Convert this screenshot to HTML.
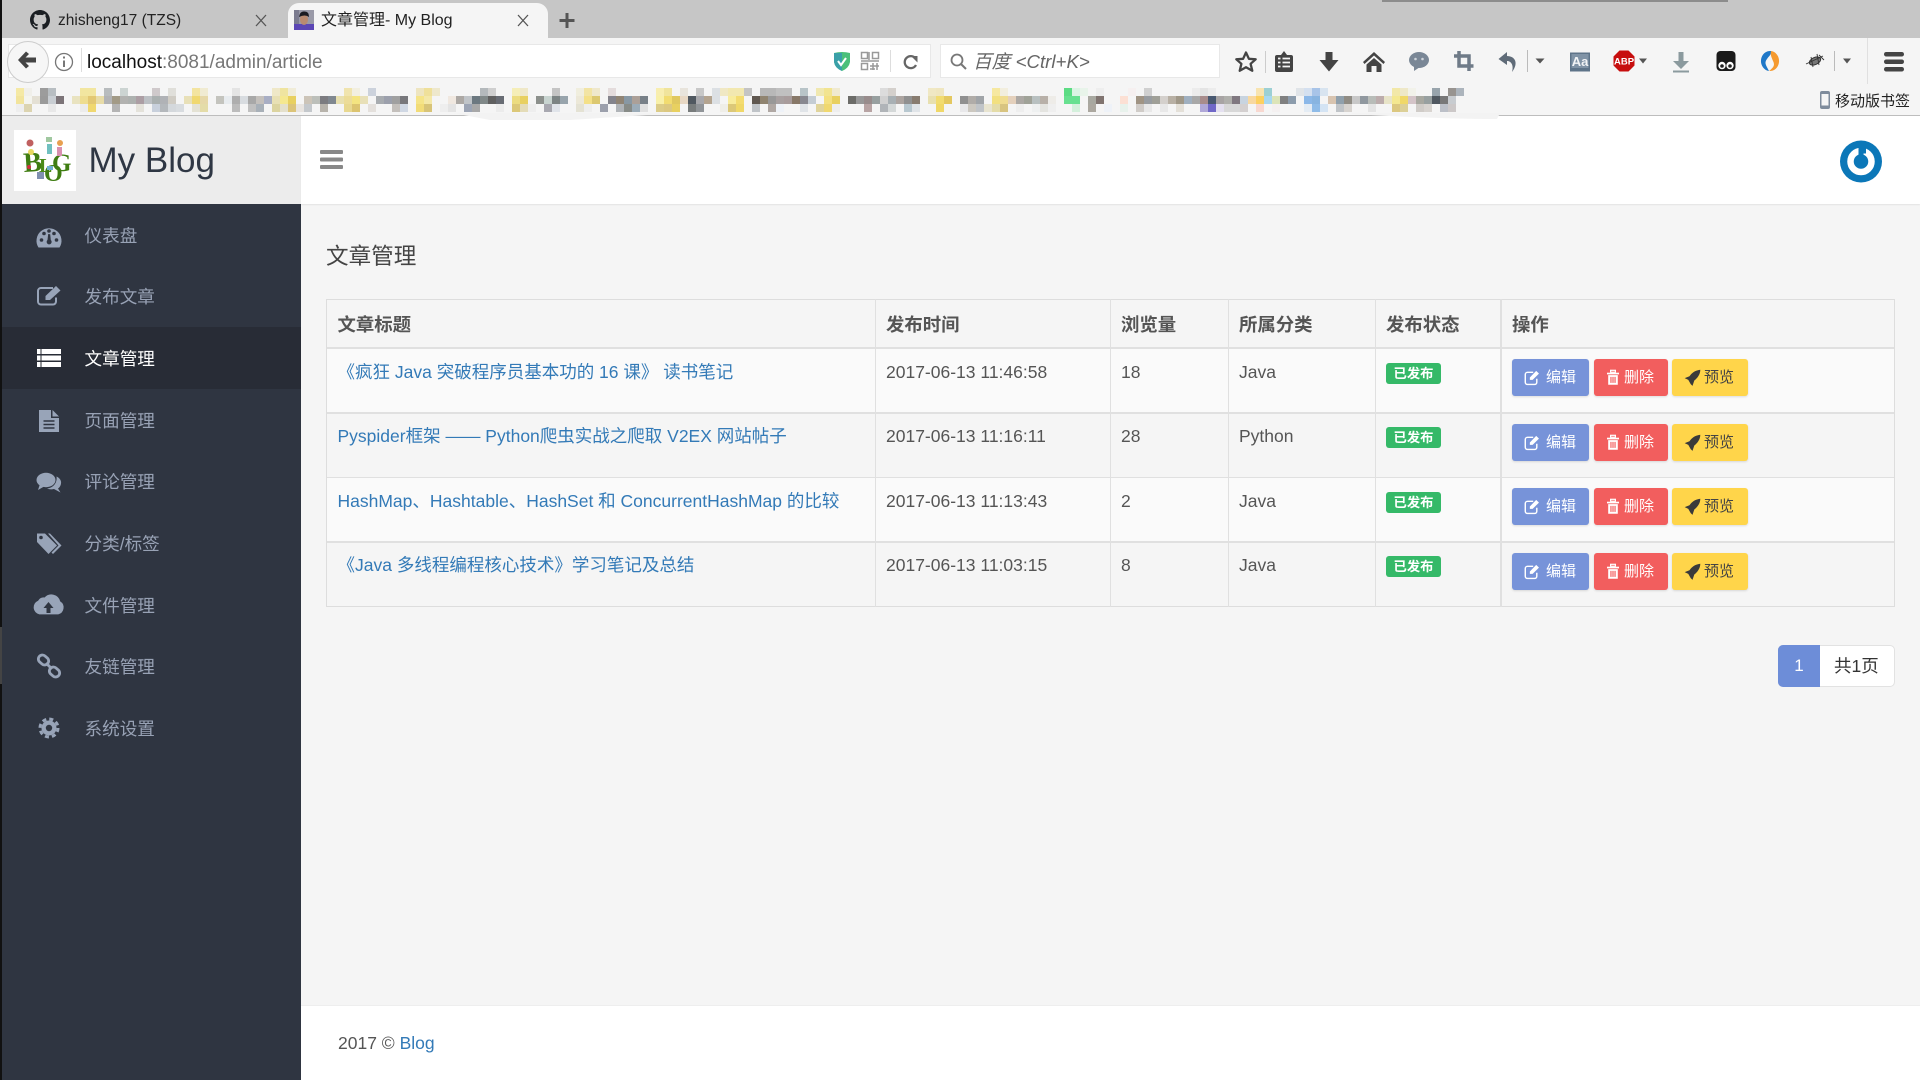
<!DOCTYPE html>
<html lang="zh-CN">
<head>
<meta charset="utf-8">
<title>文章管理- My Blog</title>
<style>
html,body{margin:0;padding:0;width:1920px;height:1080px;overflow:hidden;background:#f5f5f5;}
body{position:relative;font-family:"Liberation Sans","Noto Sans CJK SC",sans-serif;font-size:17.5px;color:#555;}
.b,.t{position:absolute;}
.t{white-space:nowrap;line-height:24px;height:24px;}
a{color:#337ab7;text-decoration:none;}
.s{left:84.5px;color:#98a2b5;font-size:17.6px;}
.h{font-weight:bold;font-size:18.4px;color:#555;}
.btn{position:absolute;height:37px;border-radius:3px;box-shadow:0 1px 2px rgba(0,0,0,.12);}
.bl{left:1512px;width:77px;background:#7793d9;}
.rd{left:1594px;width:74px;background:#f25e5e;}
.yl{left:1672px;width:76px;background:#ffd54a;}
.bt{font-size:15px;color:#fff;}
.by{font-size:15px;color:#444;}
.g{position:absolute;left:1386px;width:55px;height:21px;background:#35b968;border-radius:3px;color:#fff;font-size:13.3px;font-weight:bold;line-height:21px;text-align:center;}
svg{position:absolute;left:0;top:0;}
.m rect{width:8px;height:8px;}
</style>
</head>
<body>
<!-- browser chrome -->
<div class="b" style="left:0;top:0;width:1920px;height:38px;background:#c6c6c6;"></div>
<div class="b" style="left:1382px;top:0;width:346px;height:2px;background:#8c8c8c;"></div>
<div class="b" style="left:288px;top:3px;width:260px;height:36px;background:#f5f5f5;border-radius:11px 11px 0 0;"></div>
<div class="b" style="left:0;top:38px;width:1920px;height:78px;background:#f5f5f5;"></div>
<div class="b" style="left:8px;top:44px;width:923px;height:34px;background:#fff;border:1px solid #e8e8e8;box-sizing:border-box;"></div>
<div class="b" style="left:940px;top:44px;width:280px;height:34px;background:#fff;border:1px solid #e8e8e8;box-sizing:border-box;"></div>
<div class="b" style="left:7px;top:41px;width:40px;height:40px;border-radius:50%;background:#f6f6f6;border:1px solid #ccc;"></div>
<div class="b" style="left:0;top:115px;width:1920px;height:1px;background:#bdbdbd;"></div>

<div class="t" style="left:58px;top:8.5px;font-size:15.5px;color:#222;">zhisheng17 (TZS)</div>
<div class="t" style="left:321px;top:8.5px;font-size:16px;color:#222;">文章管理- My Blog</div>
<div class="t" style="left:87px;top:50.5px;font-size:19px;color:#777;"><span style="color:#111;">localhost</span>:8081/admin/article</div>
<div class="t" style="left:973px;top:49.5px;font-size:18.7px;color:#666;font-style:italic;">百度 &lt;Ctrl+K&gt;</div>
<div class="t" style="left:1835px;top:89.5px;font-size:15px;color:#222;">移动版书签</div>

<!-- app -->
<div class="b" style="left:2px;top:116px;width:299px;height:88px;background:#ececec;"></div>
<div class="b" style="left:301px;top:116px;width:1619px;height:88px;background:#fff;box-shadow:0 1px 1px #e4e4e4;"></div>
<div class="b" style="left:14px;top:130px;width:62px;height:61px;background:#fff;"></div>
<div class="t" style="left:88.5px;top:141px;font-size:35px;line-height:40px;height:40px;color:#2f3744;">My Blog</div>

<div class="b" style="left:2px;top:204px;width:299px;height:876px;background:#2f3541;"></div>
<div class="b" style="left:2px;top:327px;width:299px;height:62px;background:#282c36;"></div>
<div class="b" style="left:0;top:0;width:2px;height:1080px;background:#111;"></div>
<div class="b" style="left:0;top:627px;width:2px;height:57px;background:#444;"></div>

<div class="t s" style="top:224px;">仪表盘</div>
<div class="t s" style="top:285px;">发布文章</div>
<div class="t s" style="top:347px;color:#fff;">文章管理</div>
<div class="t s" style="top:409px;">页面管理</div>
<div class="t s" style="top:470px;">评论管理</div>
<div class="t s" style="top:532px;">分类/标签</div>
<div class="t s" style="top:594px;">文件管理</div>
<div class="t s" style="top:655px;">友链管理</div>
<div class="t s" style="top:717px;">系统设置</div>

<div class="t" style="left:326px;top:245px;font-size:22.6px;color:#444;">文章管理</div>

<!-- table -->
<div class="b" style="left:327px;top:348px;width:1567px;height:65px;background:#fafafa;"></div>
<div class="b" style="left:327px;top:478px;width:1567px;height:64px;background:#fafafa;"></div>
<div class="b" style="left:326px;top:299px;width:1569px;height:1px;background:#ddd;"></div>
<div class="b" style="left:326px;top:346.500px;width:1569px;height:2px;background:#e0e0e0;"></div>
<div class="b" style="left:326px;top:412px;width:1569px;height:2px;background:#e0e0e0;"></div>
<div class="b" style="left:326px;top:477px;width:1569px;height:1px;background:#e0e0e0;"></div>
<div class="b" style="left:326px;top:541px;width:1569px;height:2px;background:#e0e0e0;"></div>
<div class="b" style="left:326px;top:606px;width:1569px;height:1px;background:#ddd;"></div>
<div class="b" style="left:326px;top:299px;width:1px;height:308px;background:#ddd;"></div>
<div class="b" style="left:875px;top:299px;width:1px;height:308px;background:#e0e0e0;"></div>
<div class="b" style="left:1110px;top:299px;width:1px;height:308px;background:#e0e0e0;"></div>
<div class="b" style="left:1228px;top:299px;width:1px;height:308px;background:#e0e0e0;"></div>
<div class="b" style="left:1375px;top:299px;width:1px;height:308px;background:#e0e0e0;"></div>
<div class="b" style="left:1500px;top:299px;width:2px;height:308px;background:#e0e0e0;"></div>
<div class="b" style="left:1894px;top:299px;width:1px;height:308px;background:#ddd;"></div>

<div class="t h" style="left:337.500px;top:312.500px;">文章标题</div>
<div class="t h" style="left:886px;top:312.500px;">发布时间</div>
<div class="t h" style="left:1121px;top:312.500px;">浏览量</div>
<div class="t h" style="left:1239px;top:312.500px;">所属分类</div>
<div class="t h" style="left:1386px;top:312.500px;">发布状态</div>
<div class="t h" style="left:1512px;top:312.500px;">操作</div>

<div class="t" style="left:337.500px;top:360px;"><a href="#">《疯狂 Java 突破程序员基本功的 16 课》 读书笔记</a></div>
<div class="t" style="left:886px;top:360px;">2017-06-13 11:46:58</div>
<div class="t" style="left:1121px;top:360px;">18</div>
<div class="t" style="left:1239px;top:360px;">Java</div>
<div class="g" style="top:363px;">已发布</div>

<div class="t" style="left:337.500px;top:424px;"><a href="#">Pyspider框架 —— Python爬虫实战之爬取 V2EX 网站帖子</a></div>
<div class="t" style="left:886px;top:424px;">2017-06-13 11:16:11</div>
<div class="t" style="left:1121px;top:424px;">28</div>
<div class="t" style="left:1239px;top:424px;">Python</div>
<div class="g" style="top:427px;">已发布</div>

<div class="t" style="left:337.500px;top:489px;"><a href="#">HashMap、Hashtable、HashSet 和 ConcurrentHashMap 的比较</a></div>
<div class="t" style="left:886px;top:489px;">2017-06-13 11:13:43</div>
<div class="t" style="left:1121px;top:489px;">2</div>
<div class="t" style="left:1239px;top:489px;">Java</div>
<div class="g" style="top:492px;">已发布</div>

<div class="t" style="left:337.500px;top:553px;"><a href="#">《Java 多线程编程核心技术》学习笔记及总结</a></div>
<div class="t" style="left:886px;top:553px;">2017-06-13 11:03:15</div>
<div class="t" style="left:1121px;top:553px;">8</div>
<div class="t" style="left:1239px;top:553px;">Java</div>
<div class="g" style="top:556px;">已发布</div>

<div class="btn bl" style="top:359px;"></div><div class="btn rd" style="top:359px;"></div><div class="btn yl" style="top:359px;"></div>
<div class="btn bl" style="top:424px;"></div><div class="btn rd" style="top:424px;"></div><div class="btn yl" style="top:424px;"></div>
<div class="btn bl" style="top:488px;"></div><div class="btn rd" style="top:488px;"></div><div class="btn yl" style="top:488px;"></div>
<div class="btn bl" style="top:553px;"></div><div class="btn rd" style="top:553px;"></div><div class="btn yl" style="top:553px;"></div>

<div class="t bt" style="left:1546px;top:366px;">编辑</div><div class="t bt" style="left:1624px;top:366px;">删除</div><div class="t by" style="left:1704px;top:366px;">预览</div>
<div class="t bt" style="left:1546px;top:431px;">编辑</div><div class="t bt" style="left:1624px;top:431px;">删除</div><div class="t by" style="left:1704px;top:431px;">预览</div>
<div class="t bt" style="left:1546px;top:495px;">编辑</div><div class="t bt" style="left:1624px;top:495px;">删除</div><div class="t by" style="left:1704px;top:495px;">预览</div>
<div class="t bt" style="left:1546px;top:560px;">编辑</div><div class="t bt" style="left:1624px;top:560px;">删除</div><div class="t by" style="left:1704px;top:560px;">预览</div>

<!-- pagination -->
<div class="b" style="left:1778px;top:645px;width:117px;height:42px;background:#fff;border:1px solid #e2e2e2;border-radius:5px;box-sizing:border-box;"></div>
<div class="b" style="left:1778px;top:645px;width:42px;height:42px;background:#6d8dd8;border-radius:5px 0 0 5px;color:#fff;line-height:42px;text-align:center;font-size:17px;">1</div>
<div class="t" style="left:1834px;top:654px;color:#333;">共1页</div>

<!-- footer -->
<div class="b" style="left:301px;top:1005px;width:1619px;height:75px;background:#fff;border-top:1px solid #eee;box-sizing:border-box;"></div>
<div class="t" style="left:338px;top:1031px;color:#555;">2017 © <a href="#">Blog</a></div>

<svg width="1920" height="1080" viewBox="0 0 1920 1080" xmlns="http://www.w3.org/2000/svg">
<!-- mosaic -->
<g class="m" shape-rendering="crispEdges">
<g transform="translate(0,88)">
<rect x="16" fill="#f5e9a5"/><rect x="24" fill="#f0efea"/><rect x="40" fill="#9c9c9c"/><rect x="48" fill="#b8bec2"/><rect x="80" fill="#f2e6a0"/><rect x="88" fill="#f2e6a0"/><rect x="104" fill="#b8bcbe"/><rect x="120" fill="#ccd4d2"/><rect x="152" fill="#cfc9cb"/><rect x="168" fill="#e0dfda"/><rect x="192" fill="#f3e4a0"/><rect x="200" fill="#f0ebd2"/><rect x="232" fill="#e4e4e4"/><rect x="272" fill="#efe8c8"/><rect x="280" fill="#efe4a0"/><rect x="288" fill="#f0ecd8"/><rect x="344" fill="#f0e4ae"/><rect x="352" fill="#f2efe0"/><rect x="368" fill="#ccd2dc"/><rect x="416" fill="#eee5c0"/><rect x="424" fill="#efe09a"/><rect x="432" fill="#eee8cc"/><rect x="480" fill="#b4b9bc"/><rect x="488" fill="#cfcfcf"/><rect x="512" fill="#f5eeb8"/>
<rect x="520" fill="#efe8c8"/><rect x="552" fill="#c4c4c4"/><rect x="576" fill="#f0eede"/><rect x="584" fill="#f2e4a4"/><rect x="592" fill="#efe8cc"/><rect x="608" fill="#e4dcdc"/><rect x="656" fill="#f8eeb0"/><rect x="664" fill="#f0e49c"/><rect x="680" fill="#e8e4dc"/><rect x="696" fill="#c8c8c8"/><rect x="712" fill="#dce0e4"/><rect x="720" fill="#f0e8c4"/><rect x="728" fill="#f2e8b0"/><rect x="736" fill="#f2e8b0"/><rect x="744" fill="#c4c4c4"/><rect x="760" fill="#b8b8b8"/><rect x="768" fill="#b8b8b8"/><rect x="776" fill="#c0c0c0"/><rect x="784" fill="#c0c0c0"/><rect x="800" fill="#b8c4c8"/><rect x="816" fill="#f0e8b0"/><rect x="824" fill="#f2e490"/><rect x="832" fill="#f0ead0"/><rect x="880" fill="#dcdcdc"/><rect x="888" fill="#d4d0cc"/><rect x="928" fill="#f0e8c4"/><rect x="936" fill="#efe6c0"/><rect x="992" fill="#f6e8a0"/><rect x="1000" fill="#f2eede"/>
<rect x="1064" fill="#5cdc84"/><rect x="1072" fill="#dcf4e4"/><rect x="1080" fill="#e8f4ea"/><rect x="1096" fill="#eeeeee"/><rect x="1128" fill="#f6f0f0"/><rect x="1144" fill="#d0d0d0"/><rect x="1192" fill="#ececec"/><rect x="1200" fill="#e4e4e4"/><rect x="1208" fill="#ececec"/><rect x="1256" fill="#f8e4b0"/><rect x="1264" fill="#9cd0d4"/><rect x="1296" fill="#e0e4e8"/><rect x="1304" fill="#d4e0f0"/><rect x="1312" fill="#a8c4e8"/><rect x="1320" fill="#d8e4f0"/><rect x="1392" fill="#f2e8a8"/><rect x="1400" fill="#eee8c8"/><rect x="1408" fill="#f2f2ea"/><rect x="1432" fill="#98a4ac"/><rect x="1448" fill="#989490"/><rect x="1456" fill="#acb4bc"/>
</g>
<g transform="translate(0,96)">
<rect x="16" fill="#f2e49c"/><rect x="24" fill="#f4f4ee"/><rect x="32" fill="#e4e0d4"/><rect x="40" fill="#9a9a9a"/><rect x="48" fill="#c8cdd2"/><rect x="56" fill="#7c7478"/><rect x="72" fill="#e9e3c0"/><rect x="80" fill="#eedd90"/><rect x="88" fill="#e3c873"/><rect x="96" fill="#e8dca8"/><rect x="104" fill="#b2b3b5"/><rect x="112" fill="#a29a86"/><rect x="120" fill="#b2b2b0"/><rect x="128" fill="#adb1af"/><rect x="136" fill="#ac9ea4"/><rect x="144" fill="#bcc0c4"/><rect x="152" fill="#aab0b0"/><rect x="160" fill="#b0b2b6"/><rect x="168" fill="#d0ccc4"/><rect x="184" fill="#e8e0b8"/><rect x="192" fill="#f0d870"/><rect x="200" fill="#e6d8a8"/><rect x="216" fill="#c4c4be"/><rect x="224" fill="#e8ecef"/><rect x="232" fill="#aeaeae"/><rect x="240" fill="#d8dce0"/><rect x="248" fill="#a8a8a8"/><rect x="256" fill="#c4c0bc"/><rect x="264" fill="#a8aec4"/><rect x="272" fill="#e8e0b4"/><rect x="280" fill="#f5e890"/><rect x="288" fill="#e8d060"/><rect x="304" fill="#ccc4b8"/><rect x="312" fill="#bcbfba"/><rect x="320" fill="#7c7c80"/><rect x="328" fill="#808890"/><rect x="336" fill="#e8e0b0"/><rect x="344" fill="#ecdc98"/><rect x="352" fill="#f4e480"/><rect x="360" fill="#e8e0b8"/><rect x="376" fill="#a8acb0"/><rect x="384" fill="#9ca0ac"/><rect x="392" fill="#a0a0a0"/><rect x="400" fill="#78787c"/><rect x="416" fill="#f5e488"/><rect x="424" fill="#f4e8a8"/><rect x="448" fill="#f0e8e0"/><rect x="456" fill="#aca8a4"/><rect x="464" fill="#c0c4c8"/><rect x="472" fill="#6c7880"/><rect x="480" fill="#808888"/><rect x="488" fill="#606060"/><rect x="496" fill="#686c74"/><rect x="512" fill="#ecdc80"/>
<rect x="520" fill="#e8d060"/><rect x="536" fill="#8c908c"/><rect x="544" fill="#c8d4d0"/><rect x="552" fill="#7c8484"/><rect x="560" fill="#98a4ac"/><rect x="576" fill="#ece8d8"/><rect x="584" fill="#f4e088"/><rect x="592" fill="#dcc870"/><rect x="608" fill="#84848c"/><rect x="616" fill="#908474"/><rect x="624" fill="#8898a4"/><rect x="632" fill="#aca098"/><rect x="640" fill="#788088"/><rect x="656" fill="#f8f0a8"/><rect x="664" fill="#f2dc70"/><rect x="672" fill="#e0c860"/><rect x="680" fill="#e8d8c4"/><rect x="688" fill="#505860"/><rect x="696" fill="#a8a8ac"/><rect x="704" fill="#b4a490"/><rect x="712" fill="#dce0e4"/><rect x="728" fill="#f8ec9c"/><rect x="736" fill="#f4dc70"/><rect x="752" fill="#605850"/><rect x="760" fill="#908470"/><rect x="768" fill="#989898"/><rect x="776" fill="#a8a0a0"/><rect x="784" fill="#a89c9c"/><rect x="792" fill="#887868"/><rect x="800" fill="#888890"/><rect x="808" fill="#c4ccd4"/><rect x="824" fill="#f4e080"/><rect x="832" fill="#e8d060"/><rect x="848" fill="#6c6c68"/><rect x="856" fill="#989898"/><rect x="864" fill="#988c8c"/><rect x="872" fill="#98a0a0"/><rect x="880" fill="#d0d0d0"/><rect x="888" fill="#a8b0b4"/><rect x="896" fill="#aca4a0"/><rect x="904" fill="#909090"/><rect x="912" fill="#887c70"/><rect x="928" fill="#e8e0b0"/><rect x="936" fill="#f2dc70"/><rect x="944" fill="#e4c860"/><rect x="960" fill="#909090"/><rect x="968" fill="#b0aca8"/><rect x="976" fill="#a0a4a8"/><rect x="992" fill="#f2e080"/><rect x="1000" fill="#f0dc90"/><rect x="1008" fill="#e4d0bc"/><rect x="1016" fill="#aca8a4"/><rect x="1024" fill="#a0a298"/><rect x="1032" fill="#b8c0c0"/>
<rect x="1040" fill="#b8b0a8"/><rect x="1048" fill="#eeece8"/><rect x="1064" fill="#68e090"/><rect x="1072" fill="#68e090"/><rect x="1088" fill="#a8a8a0"/><rect x="1096" fill="#807470"/><rect x="1120" fill="#fce0d4"/><rect x="1136" fill="#a09484"/><rect x="1144" fill="#989ca0"/><rect x="1152" fill="#a0a098"/><rect x="1160" fill="#d4d0cc"/><rect x="1168" fill="#b8b0a4"/><rect x="1176" fill="#a09888"/><rect x="1184" fill="#a0b0c0"/><rect x="1192" fill="#a8a8a8"/><rect x="1200" fill="#a88c8c"/><rect x="1208" fill="#485870"/><rect x="1216" fill="#a8a4a4"/><rect x="1224" fill="#b0b0ac"/><rect x="1232" fill="#807880"/><rect x="1240" fill="#c8d4e0"/><rect x="1248" fill="#f8d8a0"/><rect x="1256" fill="#fcd060"/><rect x="1264" fill="#a8d8f0"/><rect x="1272" fill="#dce4b8"/><rect x="1280" fill="#808080"/><rect x="1288" fill="#8c9cac"/><rect x="1304" fill="#8cb8e8"/><rect x="1312" fill="#88b4e0"/><rect x="1328" fill="#d8c4b0"/><rect x="1336" fill="#90a0ac"/><rect x="1344" fill="#908c84"/><rect x="1352" fill="#c8c8c8"/><rect x="1360" fill="#90989f"/><rect x="1368" fill="#b8bcb8"/><rect x="1376" fill="#bcacac"/><rect x="1384" fill="#e8e4c8"/><rect x="1392" fill="#f4e890"/><rect x="1400" fill="#f0d868"/><rect x="1408" fill="#d4c4c8"/><rect x="1416" fill="#a8a8a0"/><rect x="1424" fill="#98a0a0"/><rect x="1432" fill="#505860"/><rect x="1440" fill="#787878"/><rect x="1448" fill="#c8ccd0"/>
</g>
<g transform="translate(0,104)">
<rect x="16" fill="#eeeeee"/><rect x="24" fill="#dcd4b0"/><rect x="48" fill="#e8e8e8"/><rect x="80" fill="#ececec"/><rect x="88" fill="#f0d870"/><rect x="112" fill="#b4b4b4"/><rect x="136" fill="#e4e2da"/><rect x="152" fill="#c8d0dc"/><rect x="160" fill="#b4b8bc"/><rect x="168" fill="#d4d8dc"/><rect x="176" fill="#d8dce0"/><rect x="192" fill="#e4e2d4"/><rect x="200" fill="#e4dca8"/><rect x="232" fill="#bcbcbc"/><rect x="248" fill="#c0c0c0"/><rect x="256" fill="#a8b0b8"/><rect x="272" fill="#dcd4a0"/><rect x="280" fill="#e4e0cc"/><rect x="288" fill="#dcc478"/><rect x="296" fill="#e8e4e0"/><rect x="304" fill="#c4c8cc"/><rect x="320" fill="#b8b4ac"/><rect x="344" fill="#e8d890"/><rect x="352" fill="#dcc470"/><rect x="368" fill="#e4e0dc"/><rect x="392" fill="#c4c0bc"/><rect x="400" fill="#d0d8e4"/><rect x="416" fill="#f2dc78"/><rect x="424" fill="#d8c478"/><rect x="440" fill="#eeeeee"/><rect x="448" fill="#e4e4e4"/><rect x="464" fill="#9ca4b4"/><rect x="472" fill="#a8a8a8"/><rect x="496" fill="#ececec"/><rect x="512" fill="#dcc878"/>
<rect x="520" fill="#e4dcb8"/><rect x="528" fill="#eeeeee"/><rect x="544" fill="#a8a8b0"/><rect x="552" fill="#e0e4ea"/><rect x="576" fill="#e4e2d4"/><rect x="584" fill="#eeeeee"/><rect x="600" fill="#9ca0ac"/><rect x="616" fill="#b0b4b8"/><rect x="624" fill="#888c88"/><rect x="632" fill="#9cacb8"/><rect x="640" fill="#e0e0e0"/><rect x="656" fill="#dccc88"/><rect x="664" fill="#dcc880"/><rect x="672" fill="#e8d060"/><rect x="688" fill="#787c7c"/><rect x="696" fill="#909498"/><rect x="720" fill="#efeee8"/><rect x="728" fill="#dcc878"/><rect x="736" fill="#f0d868"/><rect x="752" fill="#c0c4c8"/><rect x="768" fill="#b0a8a4"/><rect x="776" fill="#eef2f8"/><rect x="800" fill="#e0e4e8"/><rect x="816" fill="#e0d49c"/><rect x="824" fill="#f0d870"/><rect x="832" fill="#eeeeee"/><rect x="864" fill="#b8a4a4"/><rect x="880" fill="#b0b4b8"/><rect x="888" fill="#d4d8d8"/><rect x="904" fill="#b8c8d0"/><rect x="912" fill="#e0e4e8"/><rect x="936" fill="#f0d868"/><rect x="960" fill="#e8e8ea"/><rect x="968" fill="#ccc8c0"/><rect x="976" fill="#c0c4c8"/><rect x="984" fill="#e8e4d0"/><rect x="992" fill="#e4dca8"/><rect x="1000" fill="#d8c480"/><rect x="1016" fill="#eeeeee"/><rect x="1032" fill="#eef0f0"/>
<rect x="1040" fill="#e4e4e0"/><rect x="1048" fill="#efefef"/><rect x="1072" fill="#d4f0dc"/><rect x="1088" fill="#aca8a0"/><rect x="1104" fill="#eef2f8"/><rect x="1120" fill="#e8f2ec"/><rect x="1136" fill="#d0ccc8"/><rect x="1144" fill="#e8e8e8"/><rect x="1160" fill="#e8e8e8"/><rect x="1176" fill="#e4e0d8"/><rect x="1200" fill="#b0a8d8"/><rect x="1208" fill="#7068c8"/><rect x="1216" fill="#e4e0f0"/><rect x="1224" fill="#d8d8d8"/><rect x="1232" fill="#d8d8d8"/><rect x="1240" fill="#d4d0d0"/><rect x="1256" fill="#f8d8d0"/><rect x="1272" fill="#f4f0f0"/><rect x="1304" fill="#e4ecf4"/><rect x="1312" fill="#90bce8"/><rect x="1320" fill="#d4e4f4"/><rect x="1336" fill="#c0c4c8"/><rect x="1344" fill="#d8d4d0"/><rect x="1368" fill="#e4e4e4"/><rect x="1392" fill="#dcc880"/><rect x="1400" fill="#dcd098"/><rect x="1416" fill="#d0ccc8"/><rect x="1424" fill="#d8d4d0"/><rect x="1440" fill="#bcc0c8"/><rect x="1448" fill="#ccc8c8"/>
</g>
</g>
<path d="M453,113H680Q600,118 570,120H490Z" fill="#f3f3f3"/>
<path d="M1352,113H1500L1497,119Q1440,119 1352,114Z" fill="#f3f3f3"/>

<!-- tab icons -->
<g transform="translate(30,10) scale(1.25)"><path fill="#1b1f23" d="M8 0C3.58 0 0 3.58 0 8c0 3.54 2.29 6.53 5.47 7.59.4.07.55-.17.55-.38 0-.19-.01-.82-.01-1.49-2.01.37-2.53-.49-2.69-.94-.09-.23-.48-.94-.82-1.13-.28-.15-.68-.52-.01-.53.63-.01 1.08.58 1.23.82.72 1.21 1.87.87 2.33.66.07-.52.28-.87.51-1.07-1.78-.2-3.64-.89-3.64-3.95 0-.87.31-1.59.82-2.15-.08-.2-.36-1.02.08-2.12 0 0 .67-.21 2.2.82.64-.18 1.32-.27 2-.27.68 0 1.36.09 2 .27 1.53-1.04 2.2-.82 2.2-.82.44 1.1.16 1.92.08 2.12.51.56.82 1.27.82 2.15 0 3.07-1.87 3.75-3.65 3.95.29.25.54.73.54 1.48 0 1.07-.01 1.93-.01 2.2 0 .21.15.46.55.38A8.013 8.013 0 0016 8c0-4.42-3.58-8-8-8z"/></g>
<path d="M256,15L266,26M266,15L256,26M518,15L528,26M528,15L518,26" stroke="#555" stroke-width="1.3" fill="none"/>
<path d="M567,13V28M559.5,20.5H574.5" stroke="#555" stroke-width="3" fill="none"/>
<g><rect x="294" y="10" width="20" height="20" fill="#9a9aa8"/><rect x="294" y="24" width="20" height="6" fill="#5b46b5"/><rect x="294" y="10" width="5" height="14" fill="#7c7c90"/><ellipse cx="304" cy="19.500" rx="4" ry="5.500" fill="#b98a70"/><path d="M299,17Q300,11 304,11.500Q309,11 309,17Q305,14 299,17Z" fill="#1b1b22"/></g>

<!-- url bar icons -->
<path d="M18,60L26,51.500L29,54L25.500,57.500H36V62.500H25.500L29,66L26,68.500Z" fill="#444"/>
<circle cx="64" cy="62" r="8.500" fill="none" stroke="#777" stroke-width="1.300"/><path d="M64,60.500V67M64,56.500V58.500" stroke="#777" stroke-width="2"/>
<rect x="81" y="48" width="1" height="24" fill="#ddd"/>
<path d="M834,53Q842,51 850,53V62Q849,68 842,71Q835,68 834,62Z" fill="#4bc07a"/><path d="M842,53V71Q835,68 834,62V53Z" fill="#3aa0a8"/><path d="M838,61L841,65L846,58" stroke="#fff" stroke-width="2" fill="none"/>
<g fill="none" stroke="#999" stroke-width="1.500"><rect x="861.500" y="52.500" width="6" height="6"/><rect x="872.500" y="52.500" width="6" height="6"/><rect x="861.500" y="63.500" width="6" height="6"/><path d="M869,52V60M861,61H879M873,63V70M877,63V70M870,66H879M870,69H875"/></g>
<rect x="890" y="50" width="1" height="22" fill="#ddd"/>
<path d="M915.500,58.500A6,6 0 1 0 916,65" fill="none" stroke="#666" stroke-width="2.300"/><path d="M911,56H917.500V62.500Z" fill="#666"/>
<circle cx="957" cy="60" r="5.500" fill="none" stroke="#777" stroke-width="1.800"/><path d="M961,64L966,69" stroke="#777" stroke-width="2"/>

<!-- toolbar icons -->
<g transform="translate(1246,62)"><path d="M0,-9.500L2.900,-3.200L9.700,-2.700L4.600,1.800L6.300,8.800L0,5.200L-6.300,8.800L-4.600,1.800L-9.700,-2.700L-2.900,-3.200Z" fill="none" stroke="#444" stroke-width="2.300" stroke-linejoin="round"/></g>
<rect x="1265" y="51" width="1" height="22" fill="#ccc"/>
<g transform="translate(1284,62)"><rect x="-9" y="-7" width="18" height="17" rx="2" fill="#444"/><path d="M-3,-7L0,-11L3,-7Z" fill="#444"/><path d="M-6,-3.500H-3.500M-1.500,-3.500H6M-6,0.500H-3.500M-1.500,0.500H6M-6,4.500H-3.500M-1.500,4.500H6" stroke="#f5f5f5" stroke-width="1.800"/></g>
<path transform="translate(1329,62)" d="M-3.500,-10H3.500V-2H9.500L0,9.500L-9.500,-2H-3.500Z" fill="#444"/>
<g transform="translate(1374,62)" fill="#444"><path d="M0,-10L11,0L9.500,2L0,-6.500L-9.500,2L-11,0Z"/><path d="M-7.500,2.500L0,-4L7.500,2.500V10H2.500V4H-2.500V10H-7.500Z"/></g>
<g transform="translate(1419,61)"><ellipse cx="0" cy="-1" rx="10" ry="8" fill="#7a8796"/><path d="M-5,5L-5,10L1,6Z" fill="#7a8796"/><circle cx="-3.500" cy="-2" r="1.300" fill="#cfd5db"/><circle cx="3.500" cy="-2" r="1.300" fill="#cfd5db"/></g>
<path transform="translate(1464,61)" d="M-5,-10V5H9.500M-10,-5H5V10" fill="none" stroke="#6f7b88" stroke-width="3.500"/>
<path transform="translate(1508,62)" d="M-9.500,-3L-1,-10V-6C7,-6 11,1 4,10C6,3 3,-1 -1,-1V3Z" fill="#5f6b78"/>
<rect x="1527" y="50" width="1" height="22" fill="#bbb"/>
<path d="M1535.500,58.500H1544.500L1540,63.500Z" fill="#555"/>

<g transform="translate(1580,62)"><rect x="-10" y="-9.500" width="20" height="19" fill="#5e7489"/><rect x="-8.500" y="-8" width="17" height="14" fill="#8093a6"/><text x="0" y="4" text-anchor="middle" font-family="Liberation Sans" font-size="13" font-weight="bold" fill="#f2f4f6">Aa</text></g>
<g transform="translate(1624,61)"><path d="M-4.500,-10.500H4.500L10.500,-4.500V4.500L4.500,10.500H-4.500L-10.500,4.500V-4.500Z" fill="#c70e0e"/><text x="0" y="3.500" text-anchor="middle" font-family="Liberation Sans" font-size="9.500" font-weight="bold" fill="#fff">ABP</text></g>
<path d="M1639,58.500H1647L1643,63.500Z" fill="#555"/>
<g transform="translate(1681,62)" fill="#8b9a9e"><path d="M-2.500,-10H2.500V-1H8L0,7L-8,-1H-2.500Z"/><rect x="-8" y="8.500" width="16" height="2"/></g>
<g transform="translate(1726,61)"><rect x="-9.500" y="-10" width="19" height="20" rx="4" fill="#1a1a1a"/><circle cx="-4" cy="4.500" r="3.700" fill="#fff"/><circle cx="4" cy="4.500" r="3.700" fill="#fff"/><circle cx="-4" cy="5" r="1.800" fill="#222"/><circle cx="4" cy="5" r="1.800" fill="#222"/></g>
<g transform="translate(1770,61)"><path d="M1,-10A9,10 0 0 0 -1,10C-4,4 -6,2 -3,-2C-1,-5 2,-7 1,-10Z" fill="#1f78c8"/><path d="M1,-10A9,10 0 0 1 -1,10C4,6 5,4 3,0C2,-3 0,-6 1,-10Z" fill="#f59a2f"/></g>
<g transform="translate(1815,61)" stroke="#333" fill="none"><ellipse cx="0" cy="0" rx="6" ry="3.500" transform="rotate(-25)" fill="#777"/><path d="M-9,3L8,-5M-4,-4L-2,6M2,-7L4,4M4,-6L9,-1" stroke-width="0.900"/></g>
<rect x="1834" y="51" width="1" height="20" fill="#bbb"/>
<path d="M1843,58.500H1851L1847,63.500Z" fill="#555"/>
<rect x="1867" y="38" width="1" height="46" fill="#e0e0e0"/>
<g fill="#444"><rect x="1884" y="52" width="20" height="4.500" rx="2.200"/><rect x="1884" y="59.500" width="20" height="4.500" rx="2.200"/><rect x="1884" y="67" width="20" height="4.500" rx="2.200"/></g>
<g><rect x="1820" y="91" width="10" height="18" rx="2" fill="#7f8c9c"/><rect x="1821.500" y="94" width="7" height="11.500" fill="#f5f5f5"/></g>

<!-- header icons -->
<g fill="#888"><rect x="320" y="150" width="23" height="4" rx="1"/><rect x="320" y="157.500" width="23" height="4" rx="1"/><rect x="320" y="165" width="23" height="4" rx="1"/></g>
<g transform="translate(1861,161.500)"><circle r="21" fill="#0b77b8"/><circle r="10.500" fill="none" stroke="#fff" stroke-width="6.500"/><path d="M0,-17V-3" stroke="#0b77b8" stroke-width="5"/><path d="M3.500,-15V-8" stroke="#0b77b8" stroke-width="3"/></g>

<!-- blog logo -->
<g>
<text x="24" y="172" font-family="Liberation Serif" font-size="28" font-weight="bold" fill="#3f7d12" transform="rotate(-4 24 172)">B</text>
<text x="39" y="172" font-family="Liberation Serif" font-size="20" font-weight="bold" fill="#4a8a18">L</text>
<text x="44" y="181" font-family="Liberation Serif" font-size="24" font-weight="bold" fill="#3f7d12">O</text>
<text x="52" y="171" font-family="Liberation Serif" font-size="25" font-weight="bold" fill="#3f7d12">G</text>
<circle cx="30" cy="143" r="3.500" fill="#c06060"/><circle cx="31" cy="152" r="3" fill="#e8d860"/>
<rect x="46" y="137" width="6" height="5" fill="#a0c8a0"/><rect x="47" y="144" width="5" height="10" fill="#70c0c0"/>
<circle cx="60" cy="143" r="3" fill="#e8a050"/><rect x="57" y="147" width="5" height="9" fill="#d890b0"/>
<rect x="37" y="172" width="7" height="7" fill="#8090b0"/><rect x="47" y="166" width="6" height="4" fill="#70b0d0"/><circle cx="29" cy="167" r="2" fill="#d03040"/>
</g>

<!-- sidebar icons -->
<g fill="#98a4b8">
<g transform="translate(49,237)"><path d="M-10.500,10.500A12.500,12.500 0 1 1 10.500,10.500Z"/><g fill="#2f3541"><circle cx="-7.500" cy="3" r="1.800"/><circle cx="-5" cy="-3.500" r="1.800"/><circle cx="0" cy="-6" r="1.800"/><circle cx="7.500" cy="3" r="1.800"/><circle cx="5" cy="-3.500" r="1.800"/><path d="M-0.800,-3L1.200,-2.800L1.800,3A2.500,2.500 0 1 1 -1.500,3Z"/></g></g>
<g transform="translate(49,296)"><path d="M7,1.500V5.500A3,3 0 0 1 4,8.500H-8A3,3 0 0 1 -11,5.500V-5A3,3 0 0 1 -8,-8H4" fill="none" stroke="#98a4b8" stroke-width="2"/><path d="M-3.500,4V0L7,-10L11.500,-5.500L1,4Z"/></g>
<g transform="translate(49,358)" fill="#fff"><rect x="-12" y="-9" width="3.500" height="5"/><rect x="-7.500" y="-9" width="19.500" height="5"/><rect x="-12" y="-2.500" width="3.500" height="5"/><rect x="-7.500" y="-2.500" width="19.500" height="5"/><rect x="-12" y="4" width="3.500" height="5"/><rect x="-7.500" y="4" width="19.500" height="5"/></g>
<g transform="translate(49,421)"><path d="M-10,-11H2V-3H10V11H-10Z"/><path d="M3.500,-11L10,-4.500H3.500Z"/><path d="M-5.500,0H5.500M-5.500,3.500H5.500M-5.500,7H5.500" stroke="#2f3541" stroke-width="1.400"/></g>
<g transform="translate(49,483)"><ellipse cx="-3" cy="-3" rx="9.500" ry="7.200"/><path d="M-9,1L-11,7L-4,3Z"/><path d="M7.500,-6.500C11,-5 12.500,-2 12,0.500C11.800,3 10,5 9,5.500L11.500,9.500L5,6C3,6.500 0,6.500 -2,5.500C4,5 8.500,0 7.500,-6.500Z"/></g>
<g transform="translate(49,544)"><path d="M-12,-10.500H-4L8,1.500L-0.500,10L-12,-2Z"/><circle cx="-8" cy="-6.500" r="1.800" fill="#2f3541"/><path d="M-1,-10.500H1L12.500,1.500L4,10L2.500,8.500L9.500,1.500Z"/></g>
<g transform="translate(48.500,604)"><path d="M-7,8A5.500,5.500 0 0 1 -8,-2.500A5,5 0 0 1 -3,-5A7,7 0 0 1 9,-2A5.500,5.500 0 0 1 7.500,8Z" transform="scale(1.300)"/><path d="M0,-2L5,4H2V9H-2V4H-5Z" fill="#2f3541"/></g>
<g transform="translate(49,666)" fill="none" stroke="#98a4b8" stroke-width="2.800"><rect x="-11" y="-10" width="11" height="8" rx="4" transform="rotate(40 -5.500 -6)"/><rect x="0" y="2" width="11" height="8" rx="4" transform="rotate(40 5.500 6)"/><path d="M-3,-3L3,3"/></g>
<g transform="translate(49,728)"><circle r="7.500"/><circle r="9" fill="none" stroke="#98a4b8" stroke-width="3" stroke-dasharray="4 3.070"/><circle r="3.200" fill="#2f3541"/></g>
</g>

<!-- button icons -->
<defs>
<g id="e" fill="none" stroke="#fff" stroke-width="1.200" transform="scale(1.200)"><path d="M4,1V4A1.800,1.800 0 0 1 2.200,5.800H-3.800A1.800,1.800 0 0 1 -5.600,4V-2.500A1.800,1.800 0 0 1 -3.800,-4.300H1"/><path d="M-1.800,2V0L3.500,-5.500L5.800,-3.200L0.500,2Z" fill="#fff" stroke="none"/></g>
<g id="d" fill="#fff" transform="scale(1.200)"><rect x="-5" y="-4" width="10" height="1.400"/><rect x="-2" y="-6" width="4" height="1.600" fill="none" stroke="#fff" stroke-width="1"/><path d="M-4,-2H4V6H-4ZM-2.200,-0.500V4.500H-1.200V-0.500ZM-0.500,-0.500V4.500H0.500V-0.500ZM1.200,-0.500V4.500H2.200V-0.500Z" fill-rule="evenodd"/></g>
<path id="r" fill="#3a3a3a" transform="scale(1.200)" d="M6.500,-6.500C2,-6 -1,-3.500 -2.500,-1L-6.500,0.500L-3.500,2L-1.500,5.500L0,7L1.500,2.500C4,0.500 6.500,-2.500 6.500,-6.500Z"/>
</defs>
<use href="#e" x="1532" y="377.500"/><use href="#d" x="1613" y="377.500"/><use href="#r" x="1692.500" y="377.500"/>
<use href="#e" x="1532" y="442.500"/><use href="#d" x="1613" y="442.500"/><use href="#r" x="1692.500" y="442.500"/>
<use href="#e" x="1532" y="506.500"/><use href="#d" x="1613" y="506.500"/><use href="#r" x="1692.500" y="506.500"/>
<use href="#e" x="1532" y="571.500"/><use href="#d" x="1613" y="571.500"/><use href="#r" x="1692.500" y="571.500"/>
</svg>
</body>
</html>
